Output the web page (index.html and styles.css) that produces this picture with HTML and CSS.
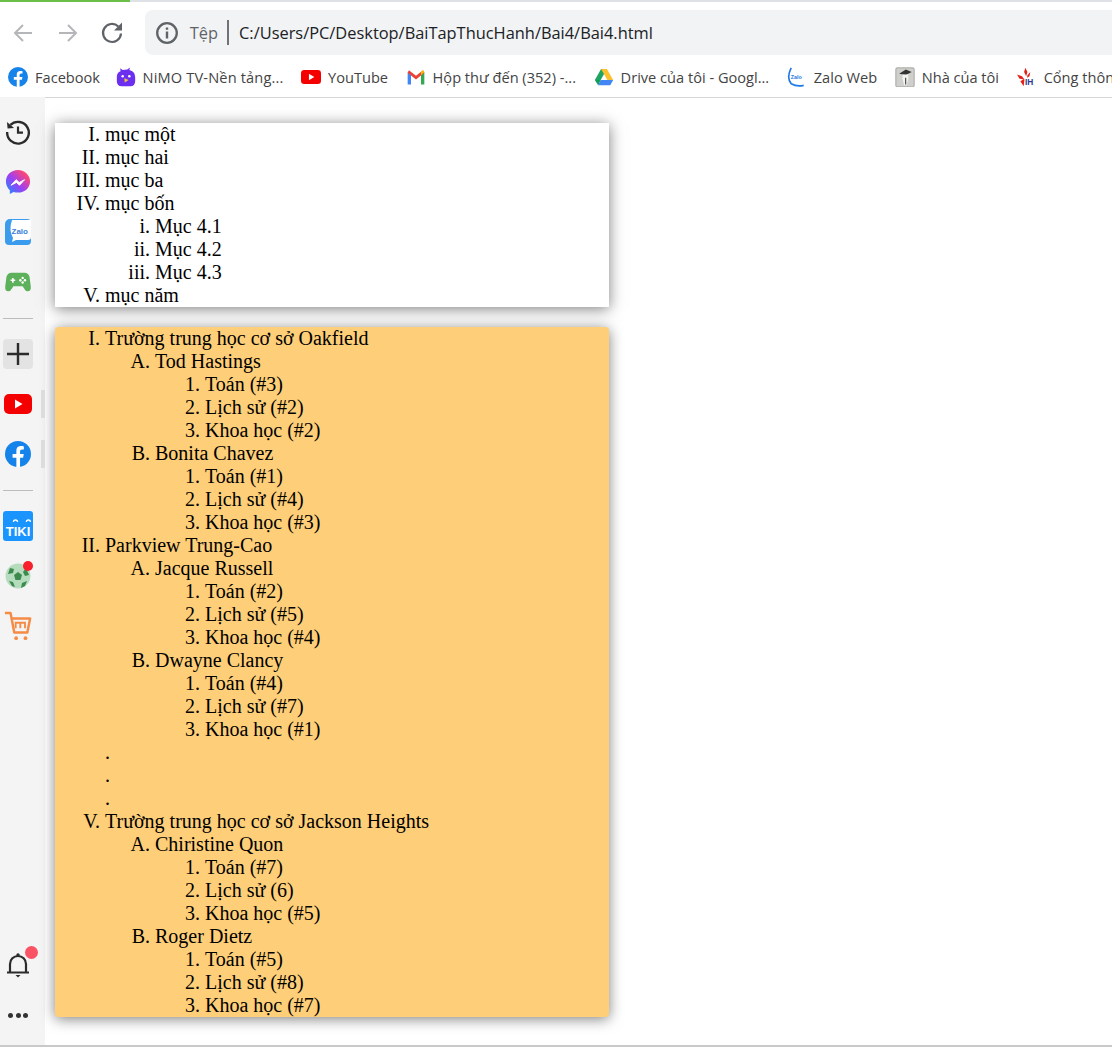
FILE: index.html
```html
<!DOCTYPE html>
<html lang="vi">
<head>
    <meta charset="UTF-8">
    <meta name="viewport" content="width=device-width, initial-scale=1.0">
    <title>Bai4</title>
    <link rel="stylesheet" href="styles.css">
</head>
<body>
    <div class="progress"><div class="progress-fill"></div></div>

    <div class="toolbar">
        <svg class="nav-icon" viewBox="0 0 24 24"><path d="M21 12H4M12 4l-8 8 8 8" fill="none" stroke="#b4b6b9" stroke-width="2"/></svg>
        <svg class="nav-icon" viewBox="0 0 24 24"><path d="M3 12h17M12 4l8 8-8 8" fill="none" stroke="#b4b6b9" stroke-width="2"/></svg>
        <svg class="nav-icon" viewBox="0 0 24 24"><path d="M21 12.500a9 9 0 1 1-2.700-7" fill="none" stroke="#5f6368" stroke-width="2.200"/><path d="M22 1.500v8h-8z" fill="#5f6368"/></svg>
        <div class="omnibox">
            <svg class="info-icon" viewBox="0 0 24 24"><circle cx="12" cy="12" r="9.800" fill="none" stroke="#5f6368" stroke-width="2.300"/><path d="M12 10.500v7M12 6.400v2.400" stroke="#5f6368" stroke-width="2.400"/></svg>
            <span class="scheme">Tệp</span>
            <span class="sep"></span>
            <span class="url">C:/Users/PC/Desktop/BaiTapThucHanh/Bai4/Bai4.html</span>
        </div>
    </div>

    <div class="bookmarks">
        <a class="bm bm-fb">
            <svg viewBox="0 0 24 24"><circle cx="12" cy="12" r="12" fill="#1583ea"/><path d="M16.700 15.400l.6-3.400H13.900V9.800c0-1 .5-1.900 2-1.900h1.500V5c-2.600-.5-6.900-.9-6.900 4.300V12H7v3.400h3.500V24h3.400v-8.600z" fill="#fff"/></svg>
            Facebook
        </a>
        <a class="bm bm-nimo">
            <svg viewBox="0 0 24 24"><path d="M8 3.500l-3-2 .5 3.500Q1 6.500 1 12v5q0 6 6 6h10q6 0 6-6v-5q0-7-7-8.500l1-3-3.500 2.500z" fill="#6c2ff0"/><circle cx="8" cy="11" r="1.500" fill="#fff"/><circle cx="16" cy="11" r="1.500" fill="#fff"/><path d="M10 13.500l5 2-4.500 3z" fill="#f8c63d"/></svg>
            NiMO TV-Nền tảng...
        </a>
        <a class="bm">
            <svg viewBox="0 0 24 24"><rect x="0" y="3.500" width="24" height="17" rx="4" fill="#f40000"/><path d="M9.500 8l6.500 4-6.500 4z" fill="#fff"/></svg>
            YouTube
        </a>
        <a class="bm">
            <svg viewBox="0 0 24 24"><path d="M2 6v15h4V10z" fill="#4285f4"/><path d="M22 6v15h-4V10z" fill="#34a853"/><path d="M2 7l10 8 10-8-1.500-3L12 10.500 3.500 4z" fill="#ea4335"/><path d="M18 6l2.500-2L22 6l-4 4z" fill="#fbbc04"/></svg>
            Hộp thư đến (352) -...
        </a>
        <a class="bm">
            <svg viewBox="0 0 24 24"><path d="M8.500 2.500h7L8 15.500H1z" fill="#1fa463"/><path d="M15.500 2.500l7.500 13h-7L8.500 2.500z" fill="#fbc02d"/><path d="M5 22l3-6.500h15L19.500 22z" fill="#4285f4"/><path d="M1 15.500h7l-3 6.500z" fill="#0f9d58"/></svg>
            Drive của tôi - Googl...
        </a>
        <a class="bm">
            <svg viewBox="0 0 24 24"><path d="M5 1Q-1 13 5 20q7 4 15 2" fill="none" stroke="#1e78e6" stroke-width="2"/><text x="4.500" y="14.500" class="zalo-mini">Zalo</text></svg>
            Zalo Web
        </a>
        <a class="bm">
            <svg viewBox="0 0 24 24"><rect x="1" y="1" width="22" height="23" rx="1.500" fill="#cfcfcc" stroke="#9a9a98"/><path d="M5 8l8-5 7 3-7 3.500z" fill="#333"/><path d="M9 9h7v5l-2 8h-3l-2-8z" fill="#f4f4f2"/><path d="M12 13h1.500v8H12z" fill="#555"/></svg>
            Nhà của tôi
        </a>
        <a class="bm">
            <svg viewBox="0 0 24 24"><path d="M10 1l2.500 5-1.500 5-2.500-5zM0 9l6 2 3 4-6-1zM16 6l-1 5-3 2 .5-3zM4 17l4 6 1-9z" fill="#e2231a"/><text x="9.500" y="22" class="ih-mini">IH</text></svg>
            Cổng thông tin
        </a>
    </div>

    <div class="main">
        <aside class="sidebar">
            <div class="side-group">
                <div class="side-item">
                    <svg viewBox="0 0 24 24"><path d="M5 5.500A10 10 0 1 1 2 12" fill="none" stroke="#2b2b2b" stroke-width="2.200"/><path d="M1.800 2.800l.6 6 6-.6z" fill="#2b2b2b"/><path d="M12 7v5.600h4.600" fill="none" stroke="#2b2b2b" stroke-width="2"/></svg>
                </div>
                <div class="side-item">
                    <svg viewBox="0 0 28 28">
                        <defs><linearGradient id="msg" x1="0" y1="1" x2="1" y2="0"><stop offset="0" stop-color="#1492ff"/><stop offset=".45" stop-color="#9b40f5"/><stop offset=".8" stop-color="#f9457d"/><stop offset="1" stop-color="#ff7a5a"/></linearGradient></defs>
                        <path d="M14 1C6.500 1 1 6.400 1 13.500c0 3.800 1.600 7 4.200 9.300V27l4-2.200c1.500.4 3 .6 4.800.6 7.500 0 13-5.300 13-12S21.500 1 14 1z" fill="url(#msg)"/>
                        <path d="M6.500 17.500l5.500-6 3.300 3 5.800-3-5.500 6-3.300-3z" fill="#fff" stroke="#fff" stroke-linejoin="round"/>
                    </svg>
                </div>
                <div class="side-item">
                    <svg viewBox="0 0 26 26"><path d="M5 0h17a4 4 0 0 1 4 4v18a4 4 0 0 1-4 4H4a4 4 0 0 1-4-4V5a5 5 0 0 1 5-5z" fill="#3b9bec"/><path d="M7 1h19v17q0 3-3 3H11l-4 2 1-4Q3.500 11 7 1z" fill="#fff"/><text x="6.500" y="14.500" class="zalo-side">Zalo</text></svg>
                </div>
                <div class="side-item">
                    <svg viewBox="0 0 28 22"><path d="M7 1h14q4.500 0 5.500 5l1.300 10q.2 5-3.300 5-2.500 0-4-3l-1.500-2.500H9L7.500 18q-1.500 3-4 3-3.500 0-3.300-5L1.500 6Q2.500 1 7 1z" fill="#5cb15a"/><path d="M6 9.200h5M8.500 6.700v5" stroke="#fff" stroke-width="1.700"/><circle cx="19" cy="6.600" r="1.300" fill="#fff"/><circle cx="19" cy="11.600" r="1.300" fill="#fff"/><circle cx="16.500" cy="9.100" r="1.300" fill="#fff"/><circle cx="21.500" cy="9.100" r="1.300" fill="#fff"/></svg>
                </div>
                <div class="side-divider"></div>
                <div class="side-item side-add">
                    <svg viewBox="0 0 20 20"><path d="M10 0v20M0 10h20" stroke="#2b2b2b" stroke-width="2.200"/></svg>
                </div>
                <div class="side-item is-open">
                    <svg class="wide-icon" viewBox="0 0 28 22"><rect width="28" height="20" y="1" rx="5" fill="#f40000"/><path d="M11 6.500l7.500 4.500-7.500 4.500z" fill="#fff"/></svg>
                </div>
                <div class="side-item is-open">
                    <svg viewBox="0 0 24 24"><circle cx="12" cy="12" r="12" fill="#1583ea"/><path d="M16.700 15.400l.6-3.400H13.900V9.800c0-1 .5-1.900 2-1.900h1.500V5c-2.600-.5-6.900-.9-6.900 4.300V12H7v3.400h3.500V24h3.400v-8.600z" fill="#fff"/></svg>
                </div>
                <div class="side-divider"></div>
                <div class="side-item">
                    <svg class="tiki-icon" viewBox="0 0 30 30"><rect width="30" height="30" rx="3" fill="#1a94ff"/><text x="15" y="25" class="tiki-word">TIKI</text><path d="M10.500 11a2 2 0 0 1 4 0M23.400 11a2 2 0 0 1 4 0" fill="none" stroke="#fff" stroke-width="1.300"/></svg>
                </div>
                <div class="side-item">
                    <svg viewBox="0 0 26 26"><circle cx="13" cy="13" r="12.500" fill="#b5dcbc"/><path d="M13 9l4 3-1.500 5h-5L9 12z" fill="#3d8a4e"/><path d="M5 5l4 1-1 4-5 1zM21 5l3 7-4 1-2-4zM4 18l4 1 2 5-3-1zM22 18l-2 5-4 2 1-5z" fill="#3d8a4e"/></svg>
                    <span class="ball-dot"></span>
                </div>
                <div class="side-item">
                    <svg class="cart-icon" viewBox="0 0 30 32"><path d="M1 2h6l4 21h14l3-15H9" fill="none" stroke="#f58b45" stroke-width="2.600" stroke-linejoin="round"/><path d="M12.500 18.500v-6h10v6M17.500 12.500v6" fill="none" stroke="#f58b45" stroke-width="2"/><circle cx="13" cy="29" r="2" fill="#f58b45"/><circle cx="23" cy="29" r="2" fill="#f58b45"/></svg>
                </div>
            </div>
            <div class="side-group">
                <div class="side-item">
                    <svg viewBox="0 0 24 26"><path d="M1 20.500h22M4 20.500V12a8 8 0 0 1 16 0v8.500" fill="none" stroke="#2b2b2b" stroke-width="2.200"/><circle cx="12" cy="3" r="1.700" fill="#2b2b2b"/><path d="M9.500 23h5l-2.500 2.500z" fill="#2b2b2b"/></svg>
                    <span class="bell-dot"></span>
                </div>
                <div class="side-item side-more"><span></span><span></span><span></span></div>
            </div>
        </aside>

        <main class="content">
            <div class="card card-plain">
                <ol type="I">
                    <li>mục một</li>
                    <li>mục hai</li>
                    <li>mục ba</li>
                    <li>mục bốn
                        <ol type="i">
                            <li>Mục 4.1</li>
                            <li>Mục 4.2</li>
                            <li>Mục 4.3</li>
                        </ol>
                    </li>
                    <li>mục năm</li>
                </ol>
            </div>

            <div class="card card-orange">
                <ol type="I">
                    <li>Trường trung học cơ sở Oakfield
                        <ol type="A">
                            <li>Tod Hastings
                                <ol>
                                    <li>Toán (#3)</li>
                                    <li>Lịch sử (#2)</li>
                                    <li>Khoa học (#2)</li>
                                </ol>
                            </li>
                            <li>Bonita Chavez
                                <ol>
                                    <li>Toán (#1)</li>
                                    <li>Lịch sử (#4)</li>
                                    <li>Khoa học (#3)</li>
                                </ol>
                            </li>
                        </ol>
                    </li>
                    <li>Parkview Trung-Cao
                        <ol type="A">
                            <li>Jacque Russell
                                <ol>
                                    <li>Toán (#2)</li>
                                    <li>Lịch sử (#5)</li>
                                    <li>Khoa học (#4)</li>
                                </ol>
                            </li>
                            <li>Dwayne Clancy
                                <ol>
                                    <li>Toán (#4)</li>
                                    <li>Lịch sử (#7)</li>
                                    <li>Khoa học (#1)</li>
                                </ol>
                            </li>
                        </ol>
                    </li>
                    <li class="gap">.</li>
                    <li class="gap">.</li>
                    <li class="gap">.</li>
                    <li value="5">Trường trung học cơ sở Jackson Heights
                        <ol type="A">
                            <li>Chiristine Quon
                                <ol>
                                    <li>Toán (#7)</li>
                                    <li>Lịch sử (6)</li>
                                    <li>Khoa học (#5)</li>
                                </ol>
                            </li>
                            <li>Roger Dietz
                                <ol>
                                    <li>Toán (#5)</li>
                                    <li>Lịch sử (#8)</li>
                                    <li>Khoa học (#7)</li>
                                </ol>
                            </li>
                        </ol>
                    </li>
                </ol>
            </div>
        </main>
    </div>
</body>
</html>
```

FILE: styles.css
```css
* {
    box-sizing: border-box;
}
html, body {
    margin: 0;
    height: 100%;
    overflow: hidden;
}
body {
    height: 1047px;
    display: flex;
    flex-direction: column;
    background: #fff;
    font-family: "Open Sans", "Noto Sans", sans-serif;
    border-bottom: 2px solid #c9c9c9;
}

/* browser top */
.progress {
    height: 2px;
    background: #dee1e6;
}
.progress-fill {
    width: 130px;
    height: 2px;
    background: #6cc04a;
}
.toolbar {
    height: 56px;
    padding: 8px 0 3px 11px;
    display: flex;
    align-items: center;
    gap: 20.6px;
}
.nav-icon {
    width: 24px;
    height: 24px;
    flex: none;
}
.omnibox {
    flex: 1;
    height: 45px;
    padding-left: 10px;
    display: flex;
    align-items: center;
    background: #f1f3f4;
    border-radius: 8px 0 0 8px;
}
.info-icon {
    width: 24px;
    height: 24px;
}
.scheme {
    margin-left: 11px;
    font-size: 16.4px;
    color: #5f6368;
}
.sep {
    width: 2px;
    height: 25px;
    margin: 0 10px 0 9px;
    background: #6f7377;
}
.url {
    font-size: 16.4px;
    color: #202124;
}
.bookmarks {
    height: 40px;
    padding: 0 0 2px 8px;
    display: flex;
    align-items: center;
    gap: 17.6px;
    border-bottom: 1px solid #d6d6d6;
    white-space: nowrap;
    overflow: hidden;
}
.bm {
    display: flex;
    align-items: center;
    gap: 7px;
    font-size: 14.6px;
    color: #444;
}
.bm svg {
    width: 20px;
    height: 20px;
    flex: none;
}
.bm-fb {
    margin-right: -2px;
}
.bm-nimo {
    letter-spacing: 0.15px;
}
.zalo-mini {
    font: bold 6.5px "Liberation Sans", sans-serif;
    fill: #1e78e6;
}
.ih-mini {
    font: bold 10px "Liberation Sans", sans-serif;
    fill: #2d3a8c;
}
.zalo-side {
    font: bold 8px "Liberation Sans", sans-serif;
    fill: #3b7fd9;
}
.tiki-word {
    font: bold 13px "Liberation Sans", sans-serif;
    fill: #fff;
    text-anchor: middle;
}

/* left bar */
.main {
    flex: 1;
    display: flex;
    min-height: 0;
}
.sidebar {
    width: 45px;
    flex: none;
    padding: 10px 0 5px;
    margin-top: -1px;
    display: flex;
    flex-direction: column;
    justify-content: space-between;
    background: #f4f4f5;
}
.side-group {
    width: 36px;
    display: flex;
    flex-direction: column;
    align-items: center;
}
.side-item {
    position: relative;
    width: 36px;
    height: 50px;
    display: flex;
    align-items: center;
    justify-content: center;
}
.side-item svg {
    width: 26px;
    height: 26px;
}
.side-item .wide-icon {
    width: 28px;
    height: 22px;
}
.side-item .tiki-icon {
    width: 30px;
    height: 30px;
}
.side-item .cart-icon {
    width: 28px;
    height: 30px;
}
.side-divider {
    width: 30px;
    height: 1px;
    margin: 10.5px 0;
    background: #bdbdbd;
}
.side-add::before {
    content: "";
    position: absolute;
    left: 3px;
    top: 10px;
    width: 30px;
    height: 30px;
    border-radius: 4px;
    background: #e3e3e3;
}
.side-add svg {
    position: relative;
    width: 22px;
    height: 22px;
}
.is-open::after {
    content: "";
    position: absolute;
    right: -9px;
    top: 11px;
    width: 4px;
    height: 28px;
    background: #dcdcdc;
}
.ball-dot, .bell-dot {
    position: absolute;
    border-radius: 50%;
}
.ball-dot {
    right: 3px;
    top: 10px;
    width: 10px;
    height: 10px;
    background: #f7202c;
}
.bell-dot {
    right: -2px;
    top: 6px;
    width: 13px;
    height: 13px;
    background: #fb5366;
}
.side-more {
    gap: 2.5px;
}
.side-more span {
    width: 5px;
    height: 5px;
    border-radius: 50%;
    background: #333;
}

/* page */
.content {
    flex: 1;
    padding: 25px 10px 0;
    font-family: "Liberation Serif", "Times New Roman", serif;
    font-size: 20px;
    line-height: 23px;
    color: #000;
}
.card {
    width: 554px;
    margin-bottom: 20px;
    box-shadow: 0 2px 14px rgba(0, 0, 0, 0.5);
}
.card-plain {
    background: #fff;
}
.card-orange {
    background: #fece78;
    border-radius: 4px;
}
ol {
    margin: 0;
    padding-left: 50px;
}
.gap {
    list-style: none;
}
```
